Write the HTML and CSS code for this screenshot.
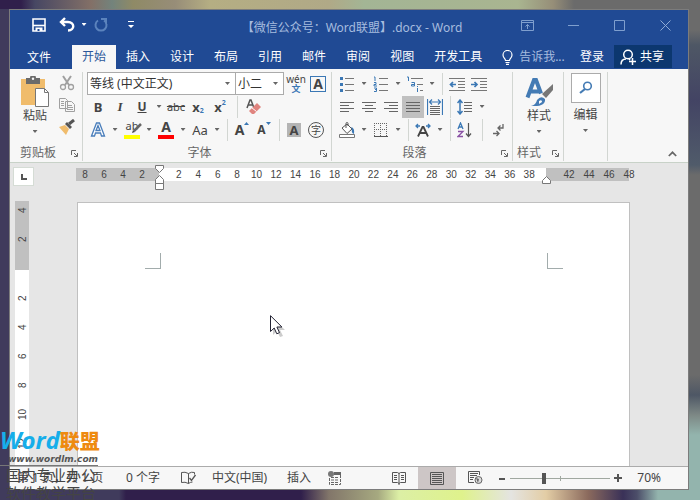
FILE: index.html
```html
<!DOCTYPE html>
<html lang="zh-CN">
  <head>
  <meta charset="UTF-8">
  <title>【微信公众号：Word联盟】.docx - Word</title>
  <link rel="stylesheet" href="styles.css">
  </head>
  <body>
    <div class="window">
      <header class="titlebar">
        <div class="quick">
          <button class="btn" aria-label="保存"><svg width="14" height="14" viewBox="0 0 14 14"><path d="M1 1h12v12H1z" fill="none" stroke="#fff" stroke-width="1.600"/><path d="M1 7.500h12" stroke="#fff" stroke-width="1.600"/><path d="M3.500 9.500h7V13h-7z" fill="#fff"/><path d="M5.500 11h2v2h-2z" fill="#204a94"/></svg></button>
          <button class="btn" aria-label="撤消"><svg width="16" height="16" viewBox="0 0 16 16"><path d="M6 1L2 5l4 4M2.500 5H9c7 0 7 8.500 0 8.500" fill="none" stroke="#fff" stroke-width="2.400"/></svg></button>
          <button class="arrow light" aria-label="撤消选项"></button>
          <button class="btn dim" aria-label="重复"><svg width="16" height="16" viewBox="0 0 16 16"><path d="M5 3.500a5.500 5.500 0 1 0 6 0M8 2h5v5" fill="none" stroke="#5b83bd" stroke-width="2"/></svg></button>
          <button class="btn custom" aria-label="自定义"><svg width="8" height="8" viewBox="0 0 8 8"><path d="M1 0h6v1H1zM1 4h6L4 7z" fill="#fff"/></svg></button>
        </div>
        <h1>【微信公众号：Word联盟】.docx - Word</h1>
        <div class="wincontrols">
          <button aria-label="功能区显示选项"><svg width="13" height="11" viewBox="0 0 13 11"><path d="M.5.5h12v10H.5zM.5 2.500h12M6.500 9V4.500M4.500 6.500l2-2 2 2" fill="none" stroke="#7f9fce"/></svg></button>
          <button aria-label="最小化"><svg width="11" height="11" viewBox="0 0 11 11"><path d="M0 5.500h11" stroke="#7f9fce"/></svg></button>
          <button aria-label="最大化"><svg width="11" height="11" viewBox="0 0 11 11"><path d="M.5.5h10v10H.5z" fill="none" stroke="#7f9fce"/></svg></button>
          <button aria-label="关闭"><svg width="11" height="11" viewBox="0 0 11 11"><path d="M.5.5l10 10M10.500.5l-10 10" stroke="#8fabd5"/></svg></button>
        </div>
      </header>

      <nav class="tabs">
        <button class="tab file">文件</button>
        <button class="tab active">开始</button>
        <button class="tab">插入</button>
        <button class="tab">设计</button>
        <button class="tab">布局</button>
        <button class="tab">引用</button>
        <button class="tab">邮件</button>
        <button class="tab">审阅</button>
        <button class="tab">视图</button>
        <button class="tab">开发工具</button>
        <button class="tab tell"><svg width="11" height="15" viewBox="0 0 11 15"><path d="M3.500 10.500c0-2-2.500-2.500-2.500-5.500a4.500 4.500 0 0 1 9 0c0 3-2.500 3.500-2.500 5.500zM3.500 12.500h4M4 14.300h3" fill="none" stroke="#fff" stroke-width="1.200"/></svg><span>告诉我...</span></button>
        <button class="tab login">登录</button>
        <button class="tab share"><svg width="16" height="16" viewBox="0 0 16 16"><circle cx="8" cy="5.500" r="4.300" fill="none" stroke="#fff" stroke-width="1.500"/><path d="M1 15.500c0-4 2.500-5.500 5-5.500M9 10l1 1M9 12.500h7M12.500 9v7" fill="none" stroke="#fff" stroke-width="1.500"/></svg><span>共享</span></button>
      </nav>

      <div class="ribbon">
        <section class="group clipboard">
          <div class="clip">
            <button class="big">
              <svg width="30" height="32" viewBox="0 0 30 32"><path d="M1 3h24v26H1z" fill="#f0bc6c"/><path d="M6 2h4a3 3 0 0 1 6 0h4v6H6z" fill="#6b6b6b"/><circle cx="13" cy="2.800" r="1.200" fill="#f7f7f7"/><path d="M15.500 12.500h9l4 4v14h-13z" fill="#fff" stroke="#777"/><path d="M24.500 12.500v4h4" fill="none" stroke="#777"/></svg>
              <span>粘贴</span><i class="caret"></i>
            </button>
            <div class="stack">
              <button class="btn" aria-label="剪切"><svg width="16" height="16" viewBox="0 0 16 16"><path d="M4 1l6 9M12 1L6 10" stroke="#a0a0a0" stroke-width="2"/><circle cx="4" cy="12" r="2.500" fill="none" stroke="#a0a0a0" stroke-width="1.300"/><circle cx="12" cy="12" r="2.500" fill="none" stroke="#a0a0a0" stroke-width="1.300"/></svg></button>
              <button class="btn" aria-label="复制"><svg width="16" height="16" viewBox="0 0 16 16"><path d="M.5 1.500h6l2 2v8h-8zM6.500 4.500h6l3 3v7h-9z" fill="#f7f7f7" stroke="#a0a0a0"/><path d="M2 4.500h3M2 6.500h3M2 8.500h3M8 8.500h5M8 10.500h6M8 12.500h6" stroke="#a0a0a0"/></svg></button>
              <button class="btn" aria-label="格式刷"><svg width="16" height="16" viewBox="0 0 16 16"><path d="M0 8l6-2 4 4-3 6z" fill="#f0bc6c"/><path d="M6 5l2-2 5 5-2 2z" fill="#555"/><path d="M10 5l5-4" stroke="#555" stroke-width="3"/></svg></button>
            </div>
          </div>
          <footer><span>剪贴板</span><button class="launch" aria-label="剪贴板设置"><svg width="7" height="7" viewBox="0 0 7 7"><path d="M.5 5V.5H5M3 3l3 3M6.500 3v3.500H3" fill="none" stroke="#666"/></svg></button></footer>
        </section>

        <section class="group font">
          <div class="row combos">
            <label class="combo"><select aria-label="字体"><option>等线 (中文正文)</option></select></label>
            <label class="combo size"><select aria-label="字号"><option>小二</option></select></label>
            <button class="btn pinyin" aria-label="拼音指南"><span>wén</span><b>文</b></button>
            <button class="btn" aria-label="字符边框"><span class="boxed">A</span></button>
          </div>
          <div class="row">
            <button class="btn b">B</button>
            <button class="btn i">I</button>
            <button class="btn u">U</button>
            <button class="arrow" aria-label="下划线选项"></button>
            <button class="btn s">abc</button>
            <button class="btn x">x<sub>2</sub></button>
            <button class="btn x">x<sup>2</sup></button>
            <i class="sep wide"></i>
            <button class="btn" aria-label="清除格式"><svg width="16" height="16" viewBox="0 0 16 16"><path d="M1 9l3-8h1l3 8M2 6h5" fill="none" stroke="#555" stroke-width="1.500"/><path d="M4 11l7-7 4 4-7 7H6l-3-3z" fill="#e0847f"/><path d="M5.500 8.500l5 4" stroke="#fff"/></svg></button>
          </div>
          <div class="row">
            <button class="btn effect" aria-label="文本效果"><svg width="16" height="17" viewBox="0 0 16 17"><path d="M1.500 15L6.500 2h3l5 13h-3l-1-3h-5l-1 3zM6 9.500h4L8 4.500z" fill="#fff" stroke="#4a7ebb" stroke-width="1.300"/></svg></button>
            <button class="arrow" aria-label="文本效果选项"></button>
            <button class="btn mark"><span>ab</span><svg width="10" height="11" viewBox="0 0 10 11"><path d="M2 8l7-7" stroke="#666" stroke-width="2.500"/><path d="M0 10l1-3 2 2z" fill="#444"/></svg></button>
            <button class="arrow" aria-label="突出显示选项"></button>
            <button class="btn color">A</button>
            <button class="arrow" aria-label="字体颜色选项"></button>
            <button class="btn aa">Aa</button>
            <button class="arrow" aria-label="更改大小写选项"></button>
            <i class="sep"></i>
            <button class="btn grow">A<svg width="5" height="3" viewBox="0 0 5 3"><path d="M0 3h5L2.500 0z" fill="#3b78b5"/></svg></button>
            <button class="btn grow small">A<svg width="5" height="3" viewBox="0 0 5 3"><path d="M0 0h5L2.500 3z" fill="#3b78b5"/></svg></button>
            <i class="sep"></i>
            <button class="btn"><span class="shade">A</span></button>
            <button class="btn"><span class="circle">字</span></button>
          </div>
          <footer><span>字体</span><button class="launch" aria-label="字体设置"><svg width="7" height="7" viewBox="0 0 7 7"><path d="M.5 5V.5H5M3 3l3 3M6.500 3v3.500H3" fill="none" stroke="#666"/></svg></button></footer>
        </section>

        <section class="group para">
          <div class="row">
            <button class="btn" aria-label="项目符号"><svg width="16" height="16" viewBox="0 0 16 16"><path d="M1 1h3v3H1zM1 7h3v3H1zM1 13h3v3H1z" fill="#3b78b5"/><path d="M6 2.500h9M6 8.500h9M6 14.500h9" stroke="#777"/></svg></button>
            <button class="arrow" aria-label="项目符号选项"></button>
            <button class="btn" aria-label="编号"><svg width="16" height="16" viewBox="0 0 16 16"><path d="M1 1h1v4M1 6.500h2v2H1V10h3M1 12h2.500v3.500H1M2 13.500h1" fill="none" stroke="#3b78b5"/><path d="M6 2.500h9M6 8.500h9M6 14.500h9" stroke="#777"/></svg></button>
            <button class="arrow" aria-label="编号选项"></button>
            <button class="btn" aria-label="多级列表"><svg width="16" height="16" viewBox="0 0 16 16"><path d="M0 1h1.500v4M4.500 6.500h3V10h-3V8.500h3M10.500 12v4M10.500 10v1" fill="none" stroke="#3b78b5"/><path d="M4 2.500h12M10 8.500h6M13 14.500h3" stroke="#777"/></svg></button>
            <button class="arrow" aria-label="多级列表选项"></button>
            <i class="sep"></i>
            <button class="btn" aria-label="减少缩进量"><svg width="16" height="14" viewBox="0 0 16 14"><path d="M0 1.500h16M9 4.500h7M9 7.500h7M9 10.500h7M0 13.500h16" stroke="#777"/><path d="M1 7.500h6M4 5L1.500 7.500 4 10" fill="none" stroke="#3b78b5" stroke-width="1.700"/></svg></button>
            <button class="btn" aria-label="增加缩进量"><svg width="16" height="14" viewBox="0 0 16 14"><path d="M0 1.500h16M9 4.500h7M9 7.500h7M9 10.500h7M0 13.500h16" stroke="#777"/><path d="M0 7.500h6M3.500 5L6 7.500 3.500 10" fill="none" stroke="#3b78b5" stroke-width="1.700"/></svg></button>
          </div>
          <div class="row">
            <button class="btn" aria-label="左对齐"><svg width="14" height="12" viewBox="0 0 14 12"><path d="M0 1.500h14M0 4.500h9M0 7.500h14M0 10.500h9" stroke="#666"/></svg></button>
            <button class="btn" aria-label="居中"><svg width="14" height="12" viewBox="0 0 14 12"><path d="M0 1.500h14M3 4.500h8M0 7.500h14M3 10.500h8" stroke="#666"/></svg></button>
            <button class="btn" aria-label="右对齐"><svg width="14" height="12" viewBox="0 0 14 12"><path d="M0 1.500h14M5 4.500h9M0 7.500h14M5 10.500h9" stroke="#666"/></svg></button>
            <button class="btn on" aria-label="两端对齐"><svg width="14" height="12" viewBox="0 0 14 12"><path d="M0 1.500h14M0 4.500h14M0 7.500h14M0 10.500h14" stroke="#666"/></svg></button>
            <button class="btn" aria-label="分散对齐"><svg width="16" height="16" viewBox="0 0 16 16"><path d="M.5 0v16M15.500 0v16M2 3h12M5 .5L2.500 3 5 5.500M11 .5L13.500 3 11 5.500" fill="none" stroke="#3b78b5" stroke-width="1.200"/><path d="M3 7.500h10M3 9.500h10M3 11.500h10M3 13.500h10M3 15.500h10" stroke="#666"/></svg></button>
            <i class="sep"></i>
            <button class="btn" aria-label="行距"><svg width="16" height="16" viewBox="0 0 16 16"><path d="M3 1v14M.5 4L3 1l2.500 3M.5 12L3 15l2.500-3" fill="none" stroke="#3b78b5" stroke-width="1.500"/><path d="M7 3.500h8M7 6.500h8M7 9.500h8M7 12.500h8" stroke="#666"/></svg></button>
            <button class="arrow" aria-label="行距选项"></button>
          </div>
          <div class="row">
            <button class="btn" aria-label="底纹"><svg width="16" height="16" viewBox="0 0 16 16"><path d="M.5 12.500h15v3H.5z" fill="#fff" stroke="#777"/><path d="M3 6l5-4 5 5-5 4.500zM7 6V1.500a1 1 0 0 1 2 0V4" fill="#fff" stroke="#555"/><path d="M12 5q4 1 3 7-3-1-2-5z" fill="#3b78b5"/></svg></button>
            <button class="arrow" aria-label="底纹选项"></button>
            <button class="btn" aria-label="边框"><svg width="14" height="14" viewBox="0 0 14 14"><path d="M0 .5h14M0 6.500h14M.5 0v14M6.500 0v14M12.500 0v14" stroke="#666" stroke-dasharray="1 1"/><path d="M0 13.500h14" stroke="#555"/></svg></button>
            <button class="arrow" aria-label="边框选项"></button>
            <i class="sep"></i>
            <button class="btn" aria-label="中文版式"><svg width="16" height="14" viewBox="0 0 16 14"><path d="M3 13.500L7.500 4h1L13 13.500M5 10h6" fill="none" stroke="#444" stroke-width="1.800"/><path d="M5 3H1M3 1L1 3l2 2M11 3h4M13 1l2 2-2 2" fill="none" stroke="#3b78b5" stroke-width="1.300"/></svg></button>
            <button class="arrow" aria-label="中文版式选项"></button>
            <i class="sep"></i>
            <button class="btn" aria-label="排序"><svg width="16" height="16" viewBox="0 0 16 16"><path d="M1 7l2.500-6L6 7M2 5h3" fill="none" stroke="#3b78b5" stroke-width="1.300"/><path d="M1 9.500h5l-5 5h5" fill="none" stroke="#8a52a5" stroke-width="1.300"/><path d="M11.500 1v13M9 11.500l2.500 3 2.500-3" fill="none" stroke="#555" stroke-width="1.200"/></svg></button>
            <i class="sep wide"></i>
            <button class="btn" aria-label="显示编辑标记"><svg width="12" height="14" viewBox="0 0 12 14"><path d="M10 1v4H5M7.500 2.500L5 5l2.500 2.500M0 10.500h6M3.500 8L6 10.500 3.500 13" fill="none" stroke="#666" stroke-width="1.300"/></svg></button>
          </div>
          <footer><span>段落</span><button class="launch" aria-label="段落设置"><svg width="7" height="7" viewBox="0 0 7 7"><path d="M.5 5V.5H5M3 3l3 3M6.500 3v3.500H3" fill="none" stroke="#666"/></svg></button></footer>
        </section>

        <section class="group style">
          <button class="big">
            <svg width="30" height="32" viewBox="0 0 30 32"><path d="M3.500 21.500L10 4h2l5 13.500M6 15.500h9" fill="none" stroke="#447bb4" stroke-width="4"/><path d="M29 8v6l-7 8-4-4z" fill="#777"/><path d="M7 30q5-1 6-6 4-5 8-1 1 8-14 7z" fill="#447bb4"/><path d="M15 25q3-2 3 1l-3 2z" fill="#fff"/></svg>
            <span>样式</span><i class="caret"></i>
          </button>
          <footer><span>样式</span><button class="launch" aria-label="样式设置"><svg width="7" height="7" viewBox="0 0 7 7"><path d="M.5 5V.5H5M3 3l3 3M6.500 3v3.500H3" fill="none" stroke="#666"/></svg></button></footer>
        </section>

        <section class="group edit">
          <button class="big">
            <span class="frame"><svg width="14" height="14" viewBox="0 0 14 14"><circle cx="8.500" cy="5" r="3.800" fill="none" stroke="#447bb4" stroke-width="1.600"/><path d="M6 8l-5 4" stroke="#447bb4" stroke-width="2.200"/></svg></span>
            <span>编辑</span><i class="caret"></i>
          </button>
        </section>
        <button class="collapse" aria-label="折叠功能区"><svg width="9" height="6" viewBox="0 0 9 6"><path d="M.8 5l3.700-3.700L8.200 5" fill="none" stroke="#666" stroke-width="1.700"/></svg></button>
      </div>

      <main class="work">
        <div class="hruler">
          <button class="tabstop" aria-label="制表符"><svg width="6" height="6" viewBox="0 0 6 6"><path d="M1 0v5h5" fill="none" stroke="#555" stroke-width="2"/></svg></button>
          <div class="scale">
            <div class="before"><span>8</span><span>6</span><span>4</span><span>2</span></div>
            <div class="measure">
              <svg class="indent" width="9" height="25" viewBox="0 0 9 25"><path d="M.5.5h8v3l-4 4-4-4zM.5 18.500v-4l4-4 4 4v4zM.5 18.500h8v6h-8z" fill="#fff" stroke="#777"/></svg>
              <span>2</span><span>4</span><span>6</span><span>8</span><span>10</span><span>12</span><span>14</span><span>16</span><span>18</span><span>20</span><span>22</span><span>24</span><span>26</span><span>28</span><span>30</span><span>32</span><span>34</span><span>36</span><span>38</span>
              <svg class="indent right" width="9" height="8" viewBox="0 0 9 8"><path d="M.5 7.500v-3l4-4 4 4v3z" fill="#fff" stroke="#777"/></svg>
            </div>
            <div class="after"><span>42</span><span>44</span><span>46</span><span>48</span></div>
          </div>
        </div>
        <div class="canvas">
          <div class="vruler">
            <div class="margin"><span>4</span><span>2</span></div>
            <div class="length"><span>2</span><span>4</span><span>6</span><span>8</span><span>10</span><span>12</span></div>
          </div>
          <div class="page">
            <i class="corner"></i>
            <i class="corner right"></i>
          </div>
        </div>
      </main>

      <footer class="status">
        <span class="pages">第 1 页，共 1 页</span>
        <span class="words">0 个字</span>
        <button aria-label="校对" class="proof"><svg width="15" height="14" viewBox="0 0 15 14"><path d="M7.500 2.500Q4 .5.500 1.500v10q3.500-1 7 1 2-1.500 4-1.500M7.500 2.500v10M7.500 2.500q3-2 6-1v2" fill="none" stroke="#555"/><path d="M8.500 7l2 2.500 4-5.500" fill="none" stroke="#555" stroke-width="1.300"/></svg></button>
        <span class="lang">中文(中国)</span>
        <span class="mode">插入</span>
        <button aria-label="宏"><svg width="13" height="14" viewBox="0 0 13 14"><circle cx="3" cy="3" r="3" fill="#777"/><path d="M6 1h7v3H6z" fill="#666"/><path d="M1.500 7v6.500h11V4M3 6.500h8M3 9h8M3 11.500h8" fill="none" stroke="#666" stroke-dasharray="3 1"/></svg></button>
        <div class="views">
          <button aria-label="阅读视图"><svg width="14" height="14" viewBox="0 0 14 14"><path d="M.5 1.500h5l1.500 1 1.500-1h5v10h-5l-1.500 1-1.500-1h-5zM7 2v12" fill="none" stroke="#555"/><path d="M2 4.500h3M2 6.500h3M2 8.500h3M9 4.500h3M9 6.500h3M9 8.500h3" stroke="#555"/></svg></button>
          <button class="current" aria-label="页面视图"><svg width="14" height="13" viewBox="0 0 14 13"><path d="M.5.5h13v12H.5zM2 2.500h10M2 4.500h10M2 6.500h10M2 8.500h10M2 10.500h10" fill="none" stroke="#555"/></svg></button>
          <button aria-label="Web 版式视图"><svg width="15" height="14" viewBox="0 0 15 14"><path d="M6 11.500H.5V.5h11V4M2 2.500h8M2 4.500h7M2 6.500h4M2 8.500h3" fill="none" stroke="#555"/><circle cx="10.500" cy="9" r="3.500" fill="#ddd" stroke="#666"/><path d="M8 7l3 1-1 4z" fill="#666"/></svg></button>
        </div>
        <div class="zoom">
          <button aria-label="缩小"><svg width="7" height="7" viewBox="0 0 7 7"><path d="M0 4h6" stroke="#555" stroke-width="2"/></svg></button>
          <input type="range" min="10" max="190" value="70" aria-label="显示比例">
          <button aria-label="放大"><svg width="8" height="8" viewBox="0 0 8 8"><path d="M0 4h8M4 0v8" stroke="#555" stroke-width="2"/></svg></button>
          <span>70%</span>
        </div>
      </footer>
    </div>

    <div class="watermark">
      <p class="brand">Word<b>联盟</b></p>
      <p class="url">www.wordlm.com</p>
      <p class="slogan">国内专业办公<br>软件教学平台</p>
    </div>

    <svg class="pointer" width="16" height="24" viewBox="0 0 16 24"><path d="M3 3v17l4-4 3 6 3-1-3-6h5z" fill="#999" opacity=".5"/><path d="M.5.700v15.800l3.700-3.500 2.600 5.800 2.700-1.200-2.600-5.600h5z" fill="#fff" stroke="#223"/></svg>
  </body>
</html>
```

FILE: styles.css
```css
* {
  box-sizing: border-box;
}

body {
  margin: 0;
  height: 100vh;
  padding: 9px 11px 10px 9px;
  overflow: hidden;
  font: 12px/16px "Noto Sans", "Noto Sans CJK SC", sans-serif;
  color: #444;
  background:
    linear-gradient(90deg, #301f4b 3%, #474763 5%, #837067 13%, #73837c 16%, #8f8a66 19%, #978d78 25%, #b5ae83 30%, #b0a987 47%, #a3b595 52%, #a9b590 74%, #968e78 79%, #6b6b6b 82%) top / 100% 9px no-repeat,
    linear-gradient(90deg, #403b5c 17%, #301f4b 18%, #301f4b 43%, #82766a 47%, #a6a980 54%, #dcefa5 57%, #dff28c 66%, #e4e4e1 73%, #e3cda5 78%, #8b6a5d 84%, #3a3158 89%, #4c4e69 91%, #93b4ad 94%) bottom / 100% 11px no-repeat,
    linear-gradient(#6b6b6b 6%, #4e5765 9%, #434464 20%, #505b6a 33%, #6b6b6b 35%, #6b6b6b 75%, #4e5765 79%, #7d8885 83%, #93b4ad 87%) right / 11px 100% no-repeat,
    #403b5c;
}

button {
  border: 0;
  padding: 0;
  background: none;
  font: inherit;
  color: inherit;
}

button svg {
  display: block;
}

.window {
  display: flex;
  flex-direction: column;
  height: 100%;
  border: 1px solid #7c7c7c;
  background: #e6e6e6;
}

/* title bar */
.titlebar {
  display: flex;
  align-items: center;
  flex: none;
  height: 35px;
  background: #204a94;
  color: #a6bcdf;
}

.quick {
  display: flex;
  align-items: center;
  flex: none;
  width: 190px;
  padding: 0 0 6px 18px;
}

.quick .btn:nth-child(2) {
  margin-left: 6px;
}

.quick .custom {
  margin-left: 8px;
}

.titlebar h1 {
  flex: 1;
  margin: 0;
  text-align: center;
  font-size: 12px;
  font-weight: normal;
  white-space: nowrap;
}

.wincontrols {
  display: flex;
  flex: none;
  width: 184px;
  padding-bottom: 4px;
}

.wincontrols button {
  display: flex;
  justify-content: center;
  width: 46px;
}

/* tabs */
.tabs {
  display: flex;
  flex: none;
  height: 24px;
  background: #204a94;
  color: #fff;
  padding-right: 16px;
}

.tab {
  padding: 0 10px;
  white-space: nowrap;
}

.tab.file {
  padding: 2px 21px 0 17px;
}

.tab.active {
  background: #f7f7f7;
  color: #2b579a;
}

.tab.tell {
  display: flex;
  align-items: center;
  gap: 6px;
  color: #a6bcdf;
}

.tab.login {
  margin-left: auto;
  padding-left: 4px;
}

.tab.share {
  display: flex;
  align-items: center;
  gap: 4px;
  height: 23px;
  padding: 0 8px 0 6px;
  background: #0c376f;
}

/* ribbon */
.ribbon {
  display: flex;
  flex: none;
  height: 94px;
  padding-top: 3px;
  background: #f7f7f7;
  border-bottom: 1px solid #c8d2c8;
}

.group {
  display: flex;
  flex-direction: column;
  flex: none;
  height: 89px;
  padding-left: 4px;
  border-right: 1px solid #d2d6d2;
}

.clipboard { width: 73px; padding-left: 10px; }
.font { width: 249px; }
.para { width: 181px; }
.style { width: 51px; }
.edit { width: 44px; padding-left: 0; }

.group footer {
  display: flex;
  align-items: center;
  margin-top: auto;
  color: #666;
}

.group footer span {
  flex: 1;
  padding-right: 8px;
  text-align: center;
}

.clipboard footer span,
.style footer span {
  padding: 0;
  text-align: left;
}

.launch {
  margin-right: 4px;
}

.row {
  display: flex;
  align-items: center;
  height: 23px;
}

.btn {
  position: relative;
  display: flex;
  align-items: center;
  justify-content: center;
  flex: none;
  width: 22px;
  height: 22px;
}

.btn.on {
  background: #c0c0c0;
}

.arrow {
  flex: none;
  width: 12px;
  height: 22px;
}

.arrow::after,
.caret,
.combo::after {
  content: "";
  display: block;
  width: 5px;
  height: 3px;
  margin: 0 auto;
  background: #666;
  clip-path: polygon(0 0, 100% 0, 50% 100%);
}

.arrow.light::after {
  background: #fff;
}

.sep {
  flex: none;
  width: 8px;
  height: 22px;
  background: linear-gradient(#d2d6d2, #d2d6d2) center / 1px 100% no-repeat;
}

.sep.wide {
  width: 12px;
}

.clip {
  display: flex;
  justify-content: space-between;
  padding-right: 4px;
}

.big {
  display: flex;
  flex-direction: column;
  align-items: center;
  padding-top: 4px;
}

.clip .big {
  width: 30px;
}

.style .big {
  width: 44px;
}

.edit .big {
  padding-top: 1px;
}

.big .caret {
  margin-top: 6px;
}

.frame {
  display: flex;
  align-items: center;
  justify-content: center;
  width: 30px;
  height: 30px;
  margin-bottom: 4px;
  border: 1px solid #ababab;
  background: #fff;
}

.combo {
  display: flex;
  align-items: center;
  width: 149px;
  height: 23px;
  padding-right: 5px;
  border: 1px solid #ababab;
  background: #fff;
}

.combo.size {
  width: 49px;
  margin: 0 1px 0 -1px;
}

.combo select {
  appearance: none;
  flex: 1;
  min-width: 0;
  padding: 0 2px;
  border: 0;
  background: none;
  font: inherit;
  color: #333;
}

.pinyin {
  flex-direction: column;
  font-size: 10px;
  line-height: 10px;
}

.pinyin b {
  font-size: 9px;
  line-height: 10px;
  color: #3b78b5;
}

.boxed {
  width: 16px;
  height: 16px;
  border: 1px solid #3b78b5;
  font: bold 14px/14px "Noto Sans", sans-serif;
}

.b { font-weight: bold; font-size: 13px; }
.i { font: italic bold 13px "Liberation Serif", serif; }
.u { font-weight: bold; text-decoration: underline; }
.s { font-size: 11px; text-decoration: line-through; }

.x {
  padding: 3px 0;
  font-size: 13px;
  font-weight: bold;
}

.x sub,
.x sup {
  font-size: 7px;
  line-height: 8px;
  color: #3b78b5;
}

.x sub { align-self: flex-end; }
.x sup { align-self: flex-start; }

.mark {
  align-items: flex-start;
  font-size: 11px;
  line-height: 14px;
}

.mark svg {
  position: absolute;
  right: 1px;
  top: 4px;
}

.mark::after,
.color::after {
  content: "";
  position: absolute;
  left: 3px;
  right: 3px;
  bottom: 2px;
  height: 4px;
  background: #ff0;
}

.color::after {
  background: #f00;
}

.color {
  align-items: flex-start;
  font-weight: bold;
  font-size: 14px;
}

.aa {
  font-size: 13px;
}

.grow {
  font-size: 14px;
  font-weight: bold;
}

.grow.small {
  font-size: 12px;
}

.grow svg {
  align-self: flex-start;
  margin-top: 3px;
}

.shade {
  width: 14px;
  height: 14px;
  background: #b4b4b4;
  font: bold 13px/14px "Noto Sans", sans-serif;
}

.circle {
  width: 16px;
  height: 16px;
  border: 1px solid #555;
  border-radius: 50%;
  font-size: 10px;
  line-height: 14px;
}

.collapse {
  align-self: flex-end;
  margin: 0 11px 5px auto;
}

/* rulers and page */
.work {
  display: flex;
  flex-direction: column;
  flex: 1;
  min-height: 0;
}

.hruler,
.vruler {
  font: 10px/13px "Liberation Sans", sans-serif;
}

.hruler {
  display: flex;
  flex: none;
  height: 38px;
  padding: 4px 59px 0 3px;
}

.tabstop {
  display: flex;
  align-items: center;
  justify-content: center;
  width: 21px;
  height: 19px;
  border: 1px solid #d5dcd5;
  background: #fff;
}

.scale {
  display: flex;
  flex: 1;
  height: 13px;
  margin: 1px 0 0 42px;
}

.scale span {
  flex: 1;
  text-align: center;
}

.before,
.after,
.measure {
  display: flex;
}

.before,
.after {
  flex: none;
  width: 83px;
  background: #c0c0c0;
}

.before {
  padding: 0 9px 0 0;
}

.before span {
  flex: none;
  width: 20px;
  margin-left: -1px;
}

.after {
  padding-left: 13px;
}

.after span {
  flex: none;
  width: 20px;
}

.measure {
  position: relative;
  flex: 1;
  padding: 0 7px 0 10px;
  background: #fff;
}

.indent {
  position: absolute;
  left: -4px;
  top: -3px;
}

.indent.right {
  left: auto;
  right: -5px;
  top: 8px;
}

.canvas {
  display: flex;
  flex: 1;
  min-height: 0;
  padding: 0 58px 0 5px;
}

.vruler {
  display: flex;
  flex-direction: column;
  flex: none;
  width: 14px;
  height: 100%;
}

.vruler div {
  display: flex;
  flex-direction: column;
  align-items: center;
}

.vruler span {
  flex: none;
  height: 29px;
  text-align: center;
  writing-mode: vertical-rl;
  transform: rotate(180deg);
}

.vruler .margin {
  flex: none;
  height: 69px;
  justify-content: flex-end;
  padding-bottom: 16px;
  background: #c0c0c0;
}

.vruler .length {
  flex: 1;
  min-height: 0;
  padding-top: 14px;
  overflow: hidden;
  background: #fff;
}

.page {
  display: flex;
  justify-content: space-between;
  flex: 1;
  margin: 1px 0 0 48px;
  padding: 50px 66px 0 67px;
  border: 1px solid #c0c0c0;
  border-bottom: 0;
  background: #fff;
}

.corner {
  width: 16px;
  height: 16px;
  border: solid #a2acac;
  border-width: 0 1px 1px 0;
}

.corner.right {
  border-width: 0 0 1px 1px;
}

/* status bar */
.status {
  display: flex;
  align-items: center;
  flex: none;
  height: 23px;
  padding: 0 27px 0 7px;
  border-top: 1px solid #ababab;
  background: #f7f7f7;
  white-space: nowrap;
}

.pages { width: 109px; }
.words { width: 55px; }
.proof { width: 31px; }
.lang { width: 75px; }
.mode { width: 41px; }

.views {
  display: flex;
  height: 100%;
  margin-left: auto;
}

.views button {
  display: flex;
  align-items: center;
  justify-content: center;
  width: 38px;
}

.views .current {
  background: #cdc6c6;
}

.zoom {
  display: flex;
  align-items: center;
  margin-left: 5px;
}

.zoom input {
  appearance: none;
  width: 100px;
  height: 12px;
  margin: 0 4px;
  background:
    linear-gradient(#a0a8a0, #a0a8a0) center / 100% 1px no-repeat,
    linear-gradient(#a0a8a0, #a0a8a0) center / 1px 5px no-repeat;
}

.zoom input::-webkit-slider-thumb {
  appearance: none;
  width: 4px;
  height: 11px;
  background: #555;
}

.zoom span {
  margin-left: 15px;
}

/* site mark over the window */
.watermark {
  position: absolute;
  left: 0;
  bottom: 0;
  height: 72px;
  white-space: nowrap;
}

.watermark p {
  margin: 0;
}

.brand {
  font: italic bold 24px/24px "Open Sans", "Noto Sans CJK SC", sans-serif;
  color: #16aeea;
}

.brand b {
  font-size: 20px;
  font-style: normal;
  color: #ee8a10;
}

.url {
  padding-left: 8px;
  font: italic bold 9px/10px "DejaVu Sans", sans-serif;
  color: #555;
}

.watermark .slogan {
  width: 98px;
  margin-top: 1px;
  padding-left: 6px;
  border-top: 1px solid #777;
  font-size: 15px;
  line-height: 18px;
}

.pointer {
  position: absolute;
  left: 270px;
  top: 315px;
}
```
